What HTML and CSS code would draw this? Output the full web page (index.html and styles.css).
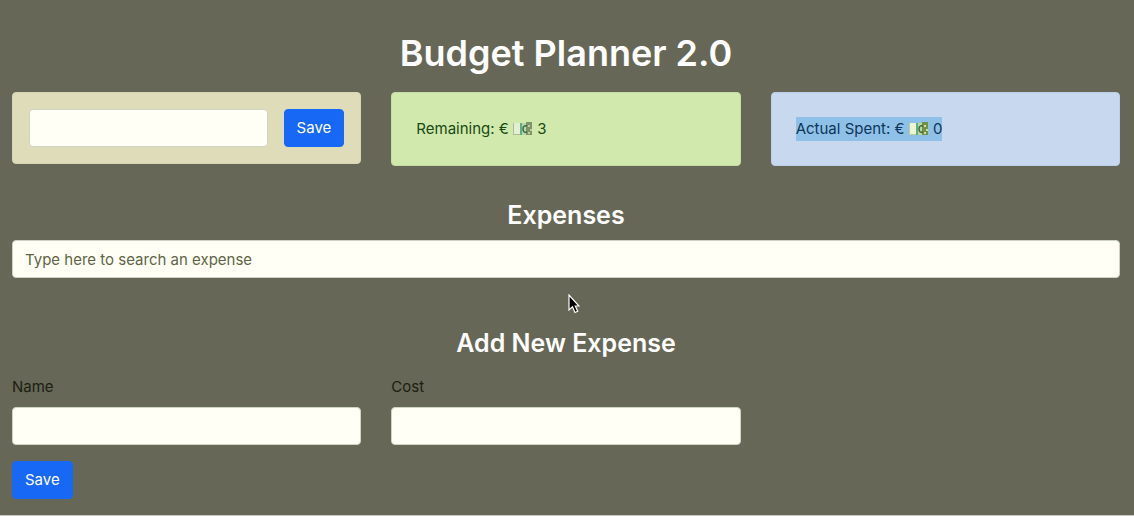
FILE: index.html
```html
<!DOCTYPE html>
<html lang="en">
<head>
<meta charset="utf-8">
<meta name="viewport" content="width=device-width, initial-scale=1">
<title>Budget Planner 2.0</title>
<link rel="stylesheet" href="styles.css">
</head>
<body>
<main class="container">
  <h1 class="title">Budget Planner 2.0</h1>
  <section class="row summary">
    <form class="alert alert-secondary budget-form">
      <input class="form-control" type="number" aria-label="Budget">
      <button class="btn" type="button">Save</button>
    </form>
    <div class="alert alert-success"><span>Remaining: € <svg class="note" viewBox="0 0 20 14" aria-hidden="true"><path fill="#e3eed5" d="M0 1h8v12H0z"/><path fill="#a9bf94" d="M0 12h8v1H0zM0 1h1v12H0z"/><path fill="#5fae7c" d="M7 1h2v12H7z"/><path fill="#b8d6ad" d="M9 1h5v12H9z"/><path fill="#7d9468" d="M13 0h6v13h-6z"/><path fill="none" stroke="#3d6540" stroke-width="1.5" d="M14 4q-4-1-4 3t4 3"/><path fill="#c4cca0" d="M15 3h2v2h-2zM17 7h2v2h-2zM15 10h2v2h-2z"/></svg> 3</span></div>
    <div class="alert alert-primary"><span class="selected">Actual Spent: € <svg class="note" viewBox="0 0 20 14" aria-hidden="true"><path fill="#eef5d5" d="M0 1h8v12H0z"/><path fill="#b7cf95" d="M0 12h8v1H0zM0 1h1v12H0z"/><path fill="#5fae7c" d="M7 1h2v12H7z"/><path fill="#b8d6ad" d="M9 1h5v12H9z"/><path fill="#6e943f" d="M13 0h6v13h-6z"/><path fill="none" stroke="#3d6540" stroke-width="1.5" d="M14 4q-4-1-4 3t4 3"/><path fill="#d4dc9c" d="M15 3h2v2h-2zM17 7h2v2h-2zM15 10h2v2h-2z"/></svg> 0</span></div>
  </section>
  <h2 class="heading">Expenses</h2>
  <input class="form-control search" type="text" aria-label="Search expenses" placeholder="Type here to search an expense">
  <h2 class="heading heading-add">Add New Expense</h2>
  <form>
    <div class="row">
      <div class="field"><label for="name">Name</label><input class="form-control" id="name" type="text"></div>
      <div class="field"><label for="cost">Cost</label><input class="form-control" id="cost" type="text"></div>
    </div>
    <button class="btn btn-submit" type="button">Save</button>
  </form>
</main>
<svg class="cursor" viewBox="0 0 12 20" aria-hidden="true"><path d="M1 1v15l3.5-3.2L7 18.5l2.7-1.2-2.4-5.3H11z" fill="#000" stroke="#fff" stroke-width="1.2"/></svg>
</body>
</html>
```
FILE: styles.css
```css
* {
  box-sizing: border-box;
}

body {
  margin: 0;
  min-height: 100vh;
  background: #666756;
  border-bottom: 1px solid #c8c8c0;
  color: #1b2010;
  font-family: Inter, "Liberation Sans", sans-serif;
  font-size: 15px;
  line-height: 24px;
}

.container {
  padding: 29px 14px 15px 12px;
}

.title,
.heading {
  margin: 0 0 8px;
  color: #fff;
  text-align: center;
  font-weight: 600;
}

.title {
  margin-bottom: 15px;
  font-size: 36px;
  line-height: 48px;
}

.heading {
  margin-top: 32px;
  font-size: 25px;
  line-height: 34px;
}

.heading-add {
  margin-top: 48px;
  margin-bottom: 15px;
}

.row {
  display: grid;
  grid-template-columns: repeat(3, minmax(0, 1fr));
  gap: 30px;
  align-items: start;
}

.alert {
  padding: 24px;
  border: 1px solid;
  border-radius: 4px;
}

.alert-secondary {
  background: #dfdcba;
  border-color: #d8d5b4;
}

.alert-success {
  background: #d2e9ae;
  border-color: #c4dda6;
  color: #174a12;
}

.alert-primary {
  background: #c8d8ef;
  border-color: #bccfe8;
}

.budget-form {
  display: flex;
  gap: 16px;
  padding: 16px;
}

.form-control {
  display: block;
  width: 100%;
  min-width: 0;
  height: 38px;
  padding: 6px 12px;
  border: 1px solid #ced4c4;
  border-radius: 4px;
  background: #fffff6;
  color: #212529;
  font: inherit;
}

.form-control::placeholder {
  color: #5f6445;
  opacity: 1;
}

.btn {
  flex: none;
  height: 38px;
  padding: 6px 12px;
  border: 1px solid #1768f5;
  border-radius: 4px;
  background: #1768f5;
  color: #fff;
  font: inherit;
}

.btn-submit {
  margin-top: 16px;
}

.field label {
  display: block;
  margin-bottom: 8px;
}

.note {
  width: 20px;
  height: 14px;
  vertical-align: -2px;
}

.selected {
  display: inline-block;
  background: #8fc1e8;
  color: #0c3558;
}

.cursor {
  position: absolute;
  top: 294px;
  left: 568px;
  width: 12px;
  height: 20px;
}
```
